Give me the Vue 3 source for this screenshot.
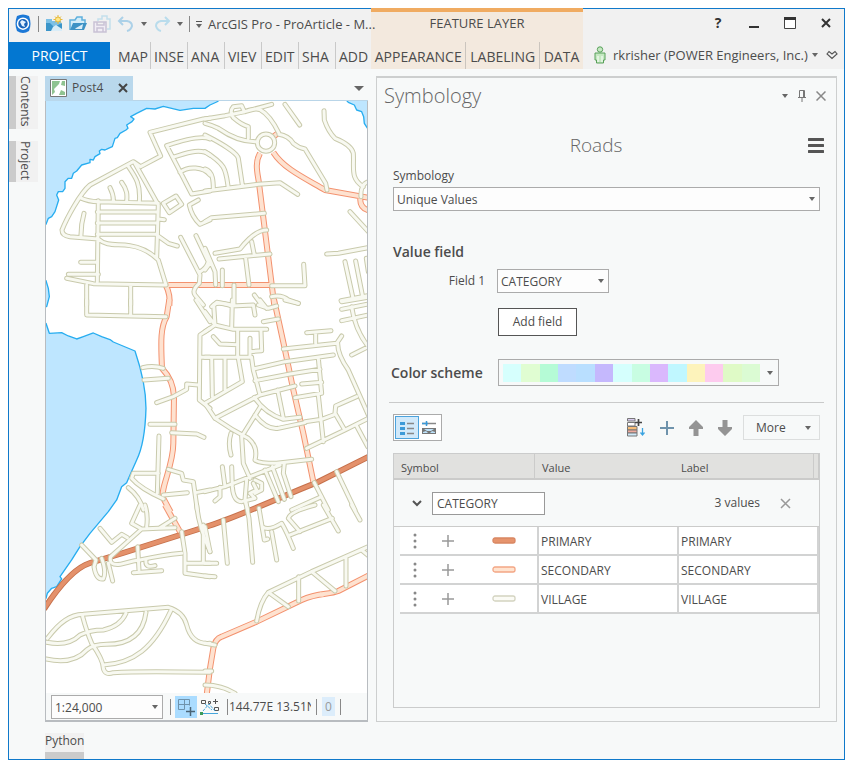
<script setup>
import { ref } from 'vue'

const tabs = ['MAP', 'INSE', 'ANA', 'VIEV', 'EDIT', 'SHA', 'ADD']
const layerTabs = ['APPEARANCE', 'LABELING', 'DATA']
const docks = ['Contents', 'Project']
const scheme = ['#d6fffd', '#e0fdd2', '#b5fbd6', '#bfdcff', '#b9dfff', '#c5b8fd', '#d5fffd', '#c8fde2', '#dab8fd', '#c0f7ff', '#fdf3bb', '#fdcbee', '#dffac6', '#dbfbd3']
const fieldName = ref('CATEGORY')
const symbols = [
  { name: 'PRIMARY', fill: '#e6946d', line: '#d98662' },
  { name: 'SECONDARY', fill: '#ffe3cf', line: '#f3a685' },
  { name: 'VILLAGE', fill: '#fbfbf5', line: '#d3d3c0' }
]

// Road geometry is stored per map sheet, in thirds of a map unit.
const sheets = [
  {
    x: 40, y: 95,
    village: 'M510 70L490 72L330 112L362 183L302 215M510 132Q480 118 380 152L455 297L510 288M398 187C430 178 480 155 510 180M420 232C445 212 490 215 510 240M302 215L280 200L150 270C120 295 80 370 66 405Q66 422 90 425L175 432M120 308Q145 320 175 320L355 325M283 202L355 330L350 490M262 210C290 250 302 270 298 320M245 262C262 285 262 300 260 320M210 278Q221 300 220 318M132 355Q122 390 123 428M175 317L172 560M172 351L350 351M172 384L350 384M172 418L350 418M355 372L373 374M350 420L385 445L412 453M175 432C200 455 230 446 270 452C310 458 340 480 355 495L378 570M122 502L172 502M85 538L175 538M80 550L160 566L378 570M140 570L140 630M272 572L272 630M370 325L408 303L425 328L388 353ZM475 315L448 330Q455 365 480 388L510 375M422 427L480 540L478 565Q455 585 465 600L490 630M468 422L505 500Q500 520 478 532',
    secondary: 'M385 570L510 570M378 572Q392 600 388 632'
  },
  {
    x: 205, y: 95,
    village: 'M0 72L60 62L120 50L200 28M0 85Q20 90 40 100Q100 142 155 140M118 50L110 32L85 35Q72 50 85 68Q110 90 130 95L130 130M120 50Q150 38 165 44Q195 60 222 115M240 28L284 90M209 143A26 26 0 1 1 157 143A26 26 0 1 1 209 143M222 118Q250 122 265 145Q280 158 300 162L362 265L366 285M357 47L358 75Q370 110 390 130Q440 150 445 175C448 220 435 250 475 275M468 305C466 280 476 264 490 260M435 350L490 410M365 477L400 475L490 458M420 500L443 605M452 498L472 600M484 490L490 530M408 617L490 602M0 288L160 268L225 263L278 298M0 380L20 368L178 355M30 475L105 462Q150 405 185 405M140 440L148 480M42 492L195 477M122 490L132 570M0 120C50 145 98 175 100 190L112 270M0 170C65 210 62 225 70 280M0 222C25 230 25 260 25 285M0 460L30 530L32 570M0 525L15 505M52 525L52 572M296 508L300 572L200 572M87 570L87 630M200 605Q230 598 250 615L280 625M148 600L170 630M20 635L35 622L80 630',
    secondary: 'M165 175C148 205 158 235 162 265L208 632M205 172C235 220 300 250 360 285L490 308M466 310Q464 338 490 346M0 570L200 570M206 124L220 114'
  },
  {
    x: 40, y: 300,
    village: 'M140 0L140 45L378 50M272 0L272 45M308 203Q340 195 370 205M312 240L385 235M350 308L400 290L440 268L440 252L475 255M330 373L405 373M395 398L470 402L492 412M357 408L352 580M355 520L280 520L275 535Q300 565 370 597M370 585L442 578M385 508L425 520L430 540L460 545L472 630M468 578L510 570M265 563Q300 590 310 630M510 85L480 105L478 300L510 325M480 172L510 172M468 0L510 65',
    secondary: 'M388 -2L380 50C362 80 362 120 366 205Q400 240 402 290L400 430C400 500 358 570 370 595L392 636'
  },
  {
    x: 205, y: 300,
    village: 'M0 35L30 75L85 88L185 88M30 75L0 95M30 75L26 15Q40 3 80 18L145 15L150 45M82 0L80 85M98 88L98 172M160 15L190 25L215 18M165 0L185 25M175 65L220 57M240 0L280 10M25 110L45 132L98 134M135 115L135 172M135 155L170 152L168 92M0 172L140 172M20 172L22 290M60 172L60 270M100 175L112 245L0 310L30 355L165 285L270 258M140 175L145 210L165 285M145 207L240 185L385 165M150 242L255 222L345 208M235 147L395 130L410 108M398 130Q398 165 430 210L490 345M332 130L332 98M305 98L378 92M340 175L350 280L270 293M290 252L350 247M340 285L355 425M305 445L420 390L490 355M418 388L390 340L392 318L455 290M300 365L350 358L385 345M148 292Q180 340 235 358L285 352M218 270L235 355M165 322L110 410M150 345Q185 390 220 385L300 368M30 355Q80 390 130 415Q160 440 150 480Q160 490 215 490L320 478M78 400Q68 430 78 465M110 410L115 490L135 535M0 575L60 560L225 495M52 500L60 560M80 500L82 560Q85 605 110 605L150 595L135 580L155 570L145 550M150 540L170 550L170 570L150 580M45 562L45 590L30 603M125 540L120 600L128 630M180 510L220 605M202 500L238 598M238 490L235 520L258 590M455 378L488 440M395 515L450 630M328 548L370 630M260 630L350 590M410 5L490 -8M410 28L490 12M410 62L490 45M440 20Q450 90 490 140M440 165L490 140',
    secondary: 'M207 -2L240 150L265 270L295 400L325 545'
  },
  {
    x: 40, y: 505,
    village: 'M180 70L215 112L245 88L262 98M125 120L168 165L162 185Q168 225 190 222Q200 200 185 160M205 175L218 228M212 155L305 72L355 70L405 68M300 0L275 55L305 72M315 0Q325 30 320 65M360 68L405 40M212 155Q205 182 240 178Q290 165 300 165Q370 150 425 145M293 125L297 195M280 203L365 197M318 168Q315 190 345 182M425 80L435 145L435 205L510 215M440 175L510 175M490 60L490 172M470 0Q475 60 510 140M22 400C60 350 90 330 130 328L385 307Q430 320 440 360Q455 420 510 415M20 412Q85 425 120 390Q150 375 190 375Q240 365 258 325M18 462Q100 480 140 435Q160 418 200 418C270 418 310 385 318 322M190 480C280 475 340 430 392 318M128 335Q140 380 155 415Q190 465 190 490Q195 512 220 503Q300 498 510 502',
    secondary: 'M375 0L420 80'
  },
  {
    x: 205, y: 505,
    village: 'M55 45L67 175M122 -10L132 40L143 172M0 65L15 140M0 175L35 175M0 213L30 215M162 10L178 105L188 102M172 65Q190 80 230 55Q245 80 265 130M200 80L215 165M355 0L400 78M440 0L465 45M250 92L382 40M285 80L250 40Q255 20 330 0M155 348Q165 290 190 262L320 200L490 125M190 262L250 305M281 215L281 288M320 200L390 258M423 155L423 243M470 135L490 152M0 415L30 420M0 498L20 498M0 540Q50 540 90 565',
    secondary: 'M490 212L400 258C370 270 340 262 290 285L155 350L50 395Q30 402 25 430L15 490L5 570M350 262L350 275'
  }
]
</script>

<template>
  <main class="window">
    <header class="ribbon">
      <section class="ribbon-main">
        <div class="quick">
          <svg class="logo" viewBox="0 0 18 20" width="18" height="20"><path d="M3 2Q9-1 15 2Q18 10 15 17Q9 21 3 17Q0 10 3 2Z" fill="#1c78d6" /><circle cx="9" cy="9.700" r="5.500" fill="#1b64b8" stroke="#fff" stroke-width="1.500" /><path d="M8 6L12 8L10 10L11 13L8 12L6 8Z" fill="#e4f2ff" /></svg>
          <i class="bar"></i>
          <button class="tool" aria-label="New project"><svg viewBox="0 0 18 18" width="18" height="18"><path d="M1 4H7V6H16V16H1Z" fill="#7cc0e6" /><path d="M1 8H5L9 12L17 8V16H1Z" fill="#3b95c9" /><path d="M8 12L11 10L17 14V16H6Z" fill="#d9edf8" /><path d="M13 0V9M8.500 4.500H17.500M10 1.500L16 7.500M16 1.500L10 7.500" stroke="#e6b93c" /><circle cx="13" cy="4.500" r="2.500" fill="#ffe889" stroke="#e6b93c" /></svg></button>
          <button class="tool" aria-label="Open project"><svg viewBox="0 0 18 18" width="18" height="18"><path d="M1 15V5H6L8 2H13V5H16V8" fill="#d3ecf8" stroke="#5fb0dd" stroke-width="1.500" /><path d="M1 15L4 8H18L15 15Z" fill="#3d92c5" /><path d="M7 13L14 9L13 14H6Z" fill="#d9edf8" /></svg></button>
          <button class="tool" aria-label="Save project"><svg viewBox="0 0 18 18" width="18" height="18" fill="none" stroke="#c9c2d5" stroke-width="1.500"><path d="M5 6V4H9V1H14V4H17V14H14" stroke="#c3dfec" /><path d="M1 7H13V17H1ZM4 7V10H11V7M4 17V13H10V17" fill="#f1edf5" /></svg></button>
          <button class="tool" aria-label="Undo"><svg viewBox="0 0 18 18" width="18" height="18" fill="none" stroke="#acd1e8" stroke-width="2"><path d="M6 2L2 6L6 10M2 6H10Q15 7 15 11Q14 15 10 16" /></svg></button>
          <i class="caret"></i>
          <button class="tool" aria-label="Redo"><svg viewBox="0 0 18 18" width="18" height="18" fill="none" stroke="#b9dcec" stroke-width="2"><path d="M12 2L16 6L12 10M16 6H8Q3 7 3 11Q4 15 8 16" /></svg></button>
          <i class="caret"></i>
          <i class="bar"></i>
          <i class="caret lined"></i>
          <h1>ArcGIS Pro - ProArticle - M...</h1>
        </div>
        <nav class="tabs">
          <button class="project">PROJECT</button>
          <button v-for="t in tabs" :key="t" class="tab">{{ t }}</button>
        </nav>
      </section>
      <section class="ribbon-layer">
        <h2>FEATURE LAYER</h2>
        <nav class="layer-tabs">
          <button v-for="t in layerTabs" :key="t">{{ t }}</button>
        </nav>
      </section>
      <section class="ribbon-end">
        <div class="win-buttons">
          <button aria-label="Help"><b>?</b></button>
          <button aria-label="Minimize"><svg width="12" height="12"><path d="M1 10H11" stroke="#333" stroke-width="2" /></svg></button>
          <button aria-label="Maximize"><svg width="12" height="12"><path d="M.5 .5H11.500V11.500H.5Z" fill="#fff" stroke="#444" /><path d="M0 1.500H12" stroke="#333" stroke-width="3" /></svg></button>
          <button aria-label="Close"><svg width="12" height="12"><path d="M2 2L10 10M10 2L2 10" stroke="#333" stroke-width="2" /></svg></button>
        </div>
        <div class="account">
          <svg width="12" height="18" viewBox="0 0 12 18" fill="#c5e8c2" stroke="#58a05a"><circle cx="6" cy="3.500" r="2.700" /><path d="M1 7H11V14H9.500V17H2.500V14H1Z" /><path d="M4 10V16M8 10V16" stroke="#fff" /></svg>
          <button class="user">rkrisher (POWER Engineers, Inc.)<i class="caret"></i></button>
          <button aria-label="Collapse ribbon"><svg width="12" height="10" fill="none" stroke="#555" stroke-width="1.200"><path d="M1 4L3 1.500L6 4L9 1.500L11 4L6 8.500Z" /></svg></button>
        </div>
      </section>
    </header>

    <div class="workspace">
      <aside class="dock">
        <button v-for="d in docks" :key="d">{{ d }}</button>
      </aside>

      <section class="map-pane">
        <div class="map-tabs">
          <div class="map-tab">
            <svg width="17" height="18" viewBox="0 0 17 18"><path d="M.5 .5H16.500V17.500H.5Z" fill="#fff" stroke="#777" /><path d="M2 2H10L9 5L4 10L5 13L2 16ZM12 2H15V7L11 6ZM11 11L15 13V16H9Z" fill="#8fc391" /></svg>
            <span>Post4</span>
            <button aria-label="Close Post4"><svg width="10" height="10"><path d="M1 1L9 9M9 1L1 9" stroke="#444" stroke-width="2" /></svg></button>
          </div>
          <i class="caret big"></i>
        </div>
        <svg class="map" viewBox="46 101 322 592" preserveAspectRatio="xMinYMin slice" role="img" aria-label="Road map">
          <rect x="46" y="101" width="800" height="900" fill="#fff" />
          <g class="water">
            <path transform="translate(40 95) scale(.3333)" d="M0 0H560L530 21L510 30L495 40L460 40L420 46L370 34L345 42L320 40L290 55L272 65L282 72L276 80L260 90L264 100L258 105L240 115L232 128L225 130L217 155L205 160L195 165L185 163L178 168L180 176L165 185L160 195L150 193L150 203L125 210L110 228L100 235L95 250L85 250L75 260L75 280L68 290L55 290L50 300L56 315L45 350L35 365L25 370L18 388L0 388Z" />
            <path transform="translate(205 95) scale(.3333)" d="M410 0L430 22L448 30L455 45L470 50L476 65L478 85L495 112V0Z" />
            <path transform="translate(40 300) scale(.3333)" d="M10 -62L18 -58L25 -35L28 -10L20 20H10ZM10 70H18L28 100L65 98L85 108L110 117L130 110L160 99L185 110L212 120L220 126L285 153Q318 250 318 325Q315 430 290 480L270 525L260 548L245 560L230 600L205 635L150 700L120 740L95 780L60 830L65 837L50 860L35 865L22 880L18 895H10Z" />
          </g>
          <path class="primary-line" d="M44 609C59 586 74 568 90 563L123 553L210 525.500C235 518 290 493 318 482L370 456" />
          <path class="primary-fill" d="M44 609C59 586 74 568 90 563L123 553L210 525.500C235 518 290 493 318 482L370 456" />
          <g v-for="kind in ['secondary', 'village']" :key="kind">
            <g v-for="part in ['line', 'fill']" :key="part" :class="kind + '-' + part">
              <path v-for="s in sheets" :key="s.x + '-' + s.y" :transform="`translate(${s.x} ${s.y}) scale(.3333)`" :d="s[kind]" />
            </g>
          </g>
        </svg>
        <footer class="map-status">
          <span class="pick scale"><select aria-label="Map scale"><option>1:24,000</option></select></span>
          <i class="bar"></i>
          <button class="grid-tool" aria-label="Grid"><svg width="18" height="18" fill="none" stroke="#6f93ac"><path d="M1.500 1.500H12.500V7.500M1.500 1.500V11.500H7.500M7.500 1.500V11.500M1.500 6.500H12.500" /><path d="M13.500 9V18M9 13.500H18" stroke="#4b6475" stroke-width="1.500" /></svg></button>
          <button class="snap-tool" aria-label="Snapping"><svg width="20" height="18" fill="none"><path d="M1.500 2.500H5.500V5.500H1.500ZM14.500 9.500H18.500V12.500H14.500ZM13 3.500H18M15.500 1V6M8.500 3.500H10.500V5.500H8.500Z" stroke="#555" /><path d="M3 13L9 6L15 13M5 6L12 12" stroke="#45a6dc" stroke-dasharray="3 1" /><path d="M2 15.500H18" stroke="#45a6dc" /><path d="M0 14H3V17H0Z" fill="#3b9a58" /></svg></button>
          <i class="bar"></i>
          <span class="coords">144.77E 13.51N</span>
          <i class="bar"></i>
          <span class="count">0</span>
          <i class="bar"></i>
        </footer>
      </section>

      <section class="panel">
        <div class="panel-head">
          <h2>Symbology</h2>
          <i class="caret"></i>
          <button aria-label="Pin"><svg width="10" height="12" fill="none" stroke="#777"><path d="M2.500 7V.5H7.500V7M6.500 1V7M1 7.500H9M5 8V12" /></svg></button>
          <button aria-label="Close Symbology"><svg width="10" height="10"><path d="M.5 .5L9.500 9.500M9.500 .5L.5 9.500" stroke="#888" stroke-width="1.500" /></svg></button>
        </div>
        <div class="layer-head">
          <h3>Roads</h3>
          <button aria-label="Menu"><svg width="16" height="15"><path d="M1 1.500H15M1 7.500H15M1 13.500H15" stroke="#555" stroke-width="3" stroke-linecap="round" /></svg></button>
        </div>
        <label class="sym-label" for="renderer">Symbology</label>
        <span class="pick"><select id="renderer"><option>Unique Values</option></select></span>
        <h4>Value field</h4>
        <div class="field-row">
          <label for="field1">Field 1</label>
          <span class="pick"><select id="field1"><option>CATEGORY</option></select></span>
        </div>
        <button class="add-field">Add field</button>
        <div class="scheme-row">
          <h4 id="scheme-title">Color scheme</h4>
          <button class="scheme" aria-labelledby="scheme-title">
            <span class="swatches"><i v-for="(c, i) in scheme" :key="i" :style="{ background: c }"></i></span>
            <i class="caret"></i>
          </button>
        </div>
        <hr />
        <div class="toolbar">
          <div class="views">
            <button class="on" aria-label="List view"><svg width="16" height="14"><path d="M1 2.500H6M1 7.500H6M1 12.500H6" stroke="#3c9ad8" stroke-width="3" /><path d="M8 2.500H15M8 7.500H15M8 12.500H15" stroke="#888" stroke-width="1.500" /></svg></button>
            <button aria-label="Advanced view"><svg width="16" height="14"><path d="M1 2.500H15" stroke="#888" stroke-width="1.500" /><path d="M1 2.500H7M5.500 0V5" stroke="#3c9ad8" stroke-width="1.500" /><path d="M1 7H15V13H1Z" fill="#777" /><path d="M3 8H13L10 10H6ZM2 11L5 10L7 12H2ZM14 11L11 10L9 12H14Z" fill="#bde2fa" /></svg></button>
          </div>
          <span class="space"></span>
          <button aria-label="Add all values"><svg width="18" height="19"><path d="M.5 .5H8V3H.5Z" fill="#d9ccef" stroke="#777" /><path d="M.5 4.500H8V8H.5Z" fill="#fff" stroke="#777" /><path d="M.5 8.500H10V12H.5Z" fill="#f7bd78" stroke="#777" /><path d="M.5 12H10V15H.5Z" fill="#efaa9d" stroke="#777" /><path d="M.5 15H10V18H.5Z" fill="#cfe9f8" stroke="#777" /><path d="M11.500 1V8M8 4.500H15" stroke="#444" stroke-width="1.700" /><path d="M15.500 10V17M13.500 14.500L15.500 17L17.500 14.500" fill="none" stroke="#3ba3e0" stroke-width="1.300" /></svg></button>
          <button aria-label="Add value"><svg width="14" height="14"><path d="M7 0V14M0 7H14" stroke="#6f93ac" stroke-width="2" /></svg></button>
          <button aria-label="Move up"><svg width="14" height="16"><path d="M7 0L14 7V9H9.500V16H4.500V9H0V7Z" fill="#949494" /></svg></button>
          <button aria-label="Move down"><svg width="14" height="16"><path d="M7 16L14 9V7H9.500V0H4.500V7H0V9Z" fill="#949494" /></svg></button>
          <button class="more">More<i class="caret"></i></button>
        </div>
        <div class="grid-box">
          <table>
            <colgroup><col class="c-indent" /><col class="c-symbol" /><col class="c-gap" /><col class="c-value" /><col class="c-label" /><col class="c-end" /></colgroup>
            <thead>
              <tr><th colspan="2">Symbol</th><th colspan="2" class="h-value">Value</th><th class="h-label">Label</th><th class="h-end"></th></tr>
            </thead>
            <tbody>
              <tr class="group">
                <td colspan="6">
                  <div>
                    <button aria-label="Collapse group"><svg width="10" height="8" fill="none"><path d="M1 2L5 6L9 2" stroke="#555" stroke-width="2" /></svg></button>
                    <input v-model="fieldName" aria-label="Group heading" />
                    <span>3 values</span>
                    <button aria-label="Remove group"><svg width="11" height="11"><path d="M1 1L10 10M10 1L1 10" stroke="#999" stroke-width="1.500" /></svg></button>
                  </div>
                </td>
              </tr>
              <tr v-for="s in symbols" :key="s.name" class="row">
                <td class="indent"></td>
                <td colspan="2" class="cell-symbol">
                  <div>
                    <svg width="4" height="16" fill="#888"><circle cx="2" cy="2" r="1.500" /><circle cx="2" cy="8" r="1.500" /><circle cx="2" cy="14" r="1.500" /></svg>
                    <svg width="12" height="12"><path d="M6 0V12M0 6H12" stroke="#999" stroke-width="1.500" /></svg>
                    <svg class="patch" width="24" height="8"><rect x="1" y="1" width="22" height="5" rx="2" :fill="s.fill" :stroke="s.line" stroke-width="1.300" /></svg>
                  </div>
                </td>
                <td>{{ s.name }}</td>
                <td colspan="2">{{ s.name }}</td>
              </tr>
            </tbody>
          </table>
        </div>
      </section>
    </div>
    <div class="bottom-dock"><button>Python</button></div>
  </main>
</template>

<style>
body { margin: 0; background: #fff; }
</style>

<style scoped>
* { box-sizing: border-box; }
.window {
  display: flex;
  flex-direction: column;
  min-height: calc(100vh - 14px);
  margin: 8px 5px 6px 8px;
  border: 1px solid #1079ca;
  background: #f7f9f9;
  color: #4c4c4c;
  font: 12px/16px "Open Sans", "Noto Sans", sans-serif;
}
button, select, input { font: inherit; color: inherit; }
button { padding: 0; border: 0; background: none; display: flex; align-items: center; justify-content: center; }
h1, h2, h3, h4 { margin: 0; font-weight: 400; }
svg { display: block; flex: none; }
.bar { width: 1px; height: 16px; background: #888; flex: none; }
.caret { width: 0; height: 0; border: 3px solid transparent; border-top: 4px solid #666; border-bottom: 0; flex: none; }
.caret.big { border-width: 5px 5px 0; }
.caret.lined { position: relative; margin-top: 4px; }
.caret.lined::before { content: ""; position: absolute; left: -3px; top: -7px; width: 6px; height: 1px; background: #555; }

.ribbon { display: grid; grid-template-columns: minmax(0, 362fr) minmax(0, 212fr) minmax(0, 261fr); background: #f1f1f1; height: 60px; }
.ribbon section { display: flex; flex-direction: column; min-width: 0; }
.ribbon .ribbon-main { position: relative; z-index: 1; }
.quick { display: flex; align-items: center; height: 33px; padding: 0 0 4px 5px; gap: 6px; }
.quick h1 { font-size: 13px; white-space: nowrap; }
.tabs { display: flex; height: 27px; font-size: 14px; }
.project { flex: none; width: 101px; background: #0377d1; color: #fff; }
.tab { flex: none; width: 37px; padding: 2px 3px 0; border-right: 1px solid #c9c9c9; justify-content: flex-start; white-space: nowrap; }
.tab:nth-child(2) { width: 41px; padding-left: 8px; }
.tab:last-child { width: 35px; border-right: 0; }
.ribbon-layer { background: #f3e9de; border-top: 4px solid #f0ab61; margin-top: -1px; }
.ribbon-layer h2 { height: 30px; padding-top: 3px; text-align: center; font-size: 13px; line-height: 16px; }
.layer-tabs { display: flex; height: 27px; font-size: 14px; }
.layer-tabs button { flex: 1 1 auto; padding-top: 2px; border-right: 1px solid #cbc5be; }
.layer-tabs button:last-child { border: 0; }
.win-buttons { display: flex; justify-content: flex-end; align-items: center; gap: 24px; height: 32px; padding: 0 12px 4px 0; }
.win-buttons button { width: 12px; height: 20px; }
.win-buttons b { font-size: 14px; color: #333; }
.account { display: flex; align-items: center; height: 27px; padding: 0 6px 0 11px; gap: 7px; }
.user { flex: 1; justify-content: flex-start; gap: 4px; white-space: nowrap; font-size: 13px; }

.workspace { flex: 1; display: grid; grid-template-columns: 36px minmax(0, 323fr) minmax(0, 469fr); padding: 7px 7px 0 0; }
.dock { display: flex; flex-direction: column; align-items: flex-start; gap: 12px; }
.dock button { writing-mode: vertical-rl; width: 29px; padding: 0 4px 2px 0; border-left: 7px solid #cbcbcb; background: #f1f1f1; line-height: 16px; }

.map-pane { display: flex; flex-direction: column; border: solid #b8bcc0; border-width: 0 1px 2px; }
.map-tabs { display: flex; justify-content: space-between; align-items: center; height: 25px; padding-right: 4px; margin: 0 -1px; background: #f7f9f9; border-bottom: 1px solid #b9d5e8; }
.map-tab { display: flex; align-items: center; gap: 5px; height: 25px; padding: 0 5px; width: 88px; background: #b9d8ec; }
.map-tab button { margin-left: auto; }
.map { flex: 1 1 592px; width: 100%; min-height: 0; }
.water { fill: #bee6ff; stroke: #27adf0; stroke-width: 4; stroke-linejoin: round; }
.map g, .map > path { stroke-linejoin: round; }
.primary-line, .primary-fill, .secondary-line, .secondary-fill, .village-line, .village-fill { fill: none; }
.primary-line { stroke: #c6714c; stroke-width: 6; }
.primary-fill { stroke: #e4916b; stroke-width: 4; }
.secondary-line { stroke: #f3926f; stroke-width: 18; }
.secondary-fill { stroke: #fee2d0; stroke-width: 12; }
.village-line { stroke: #c9caac; stroke-width: 15; stroke-linecap: round; }
.village-fill { stroke: #f8f9f1; stroke-width: 9; stroke-linecap: round; }
.map-status { display: flex; align-items: center; gap: 7px; height: 27px; padding-left: 5px; background: #f7f9f9; }
.scale { width: 112px; }
.grid-tool { width: 22px; height: 22px; background: #aadcff; margin: 0 -4px 0 -3px; }
.coords { width: 82px; overflow: hidden; white-space: nowrap; margin: 0 -2px 0 -6px; }
.count { width: 13px; height: 19px; line-height: 19px; text-align: center; background: #dcedfb; color: #999; margin: 0 -2px; }

.pick { display: block; position: relative; height: 24px; }
.pick::after { content: ""; position: absolute; right: 5px; top: 10px; border: 3px solid transparent; border-top: 4px solid #666; border-bottom: 0; pointer-events: none; }
.pick select { appearance: none; display: block; width: 100%; height: 100%; padding: 2px 16px 0 3px; border: 1px solid #ababab; border-radius: 0; background: #fdfdfd; }

.panel { display: flex; flex-direction: column; margin-left: 8px; padding: 0 16px 13px; border: solid #cdcfcf; border-width: 2px 1px 1px; }
.panel-head { display: flex; align-items: center; height: 36px; gap: 9px; margin: 0 -6px 0 -9px; }
.panel-head h2 { flex: 1; font-size: 20px; font-weight: 300; line-height: 28px; color: #666; }
.layer-head { display: flex; align-items: center; height: 62px; margin-right: -4px; }
.layer-head h3 { flex: 1; text-align: center; padding-right: 9px; font-size: 19px; font-weight: 300; color: #666; }
.sym-label { height: 12px; line-height: 12px; margin: -6px 0 5px; }
.panel h4 { font-size: 14px; font-weight: 600; line-height: 20px; }
.panel > h4 { margin-top: 31px; }
.field-row { display: flex; align-items: center; margin-top: 7px; }
.field-row label { width: 104px; padding-right: 12px; text-align: right; }
.field-row .pick { width: 112px; }
.add-field { width: 79px; height: 28px; margin: 15px 0 23px 105px; border: 1px solid #555; background: #fff; }
.scheme-row { display: flex; align-items: center; margin-left: -2px; }
.scheme-row h4 { width: 107px; white-space: nowrap; }
.scheme { width: 281px; height: 27px; padding: 0 5px 0 4px; justify-content: space-between; border: 1px solid #ababab; }
.swatches { display: flex; width: 257px; height: 18px; }
.swatches i { flex: 1; }
hr { width: calc(100% + 8px); margin: 16px -4px 11px; border: 0; border-top: 1px solid #c9caca; }
.toolbar { display: flex; align-items: center; gap: 15px; height: 27px; margin-bottom: 12px; }
.views { display: flex; width: 49px; height: 27px; padding: 1px; border: 1px solid #ababab; background: #fff; }
.views button { flex: 1; height: 23px; }
.views .on { border: 1px solid #4ca3dc; background: #d1e9fa; }
.space { flex: 1; }
.more { width: 77px; height: 25px; padding: 0 8px 0 12px; justify-content: space-between; border: 1px solid #dcdede; margin-left: -4px; }
.grid-box { flex: 1; border: 1px solid #cbcccc; }
table { width: 100%; table-layout: fixed; border-collapse: separate; border-spacing: 0; }
.c-indent { width: 6px; }
.c-symbol { width: 134px; }
.c-gap { width: 5px; }
.c-value { width: 140px; }
.c-end { width: 6px; }
th { height: 26px; padding: 3px 0 0 7px; text-align: left; font-weight: 400; font-size: 11px; background: #e1e1df; border-bottom: 2px solid #cbcbca; }
.h-value { border-left: 1px solid #cbcbca; }
.h-label { padding-left: 2px; }
.h-end { border: solid #cbcbca; border-width: 0 1px 2px; padding: 0; }
td { padding: 0; }
.group td { height: 47px; border-bottom: 1px solid #cbcbca; }
.group div { display: flex; align-items: center; padding: 0 28px 0 18px; }
.group input { width: 113px; height: 23px; margin: 0 auto 0 10px; padding: 0 4px; border: 1px solid #999; border-radius: 0; background: #fff; }
.group span { margin-right: 20px; }
.row td { height: 29px; padding: 2px 0 0 2px; background: #fff; border-bottom: 2px solid #d2d3d3; border-right: 2px solid #d2d3d3; }
.row td.indent { background: none; border: 0; }
.row .cell-symbol { padding: 0; }
.cell-symbol div { display: flex; align-items: center; padding-left: 13px; gap: 25px; }
.cell-symbol .patch { margin-left: 13px; }

.bottom-dock { height: 37px; padding: 11px 0 0 36px; display: flex; }
.bottom-dock button { align-items: flex-start; background: #f1f1f1; border-bottom: 7px solid #cbcbcb; height: 26px; }
</style>
